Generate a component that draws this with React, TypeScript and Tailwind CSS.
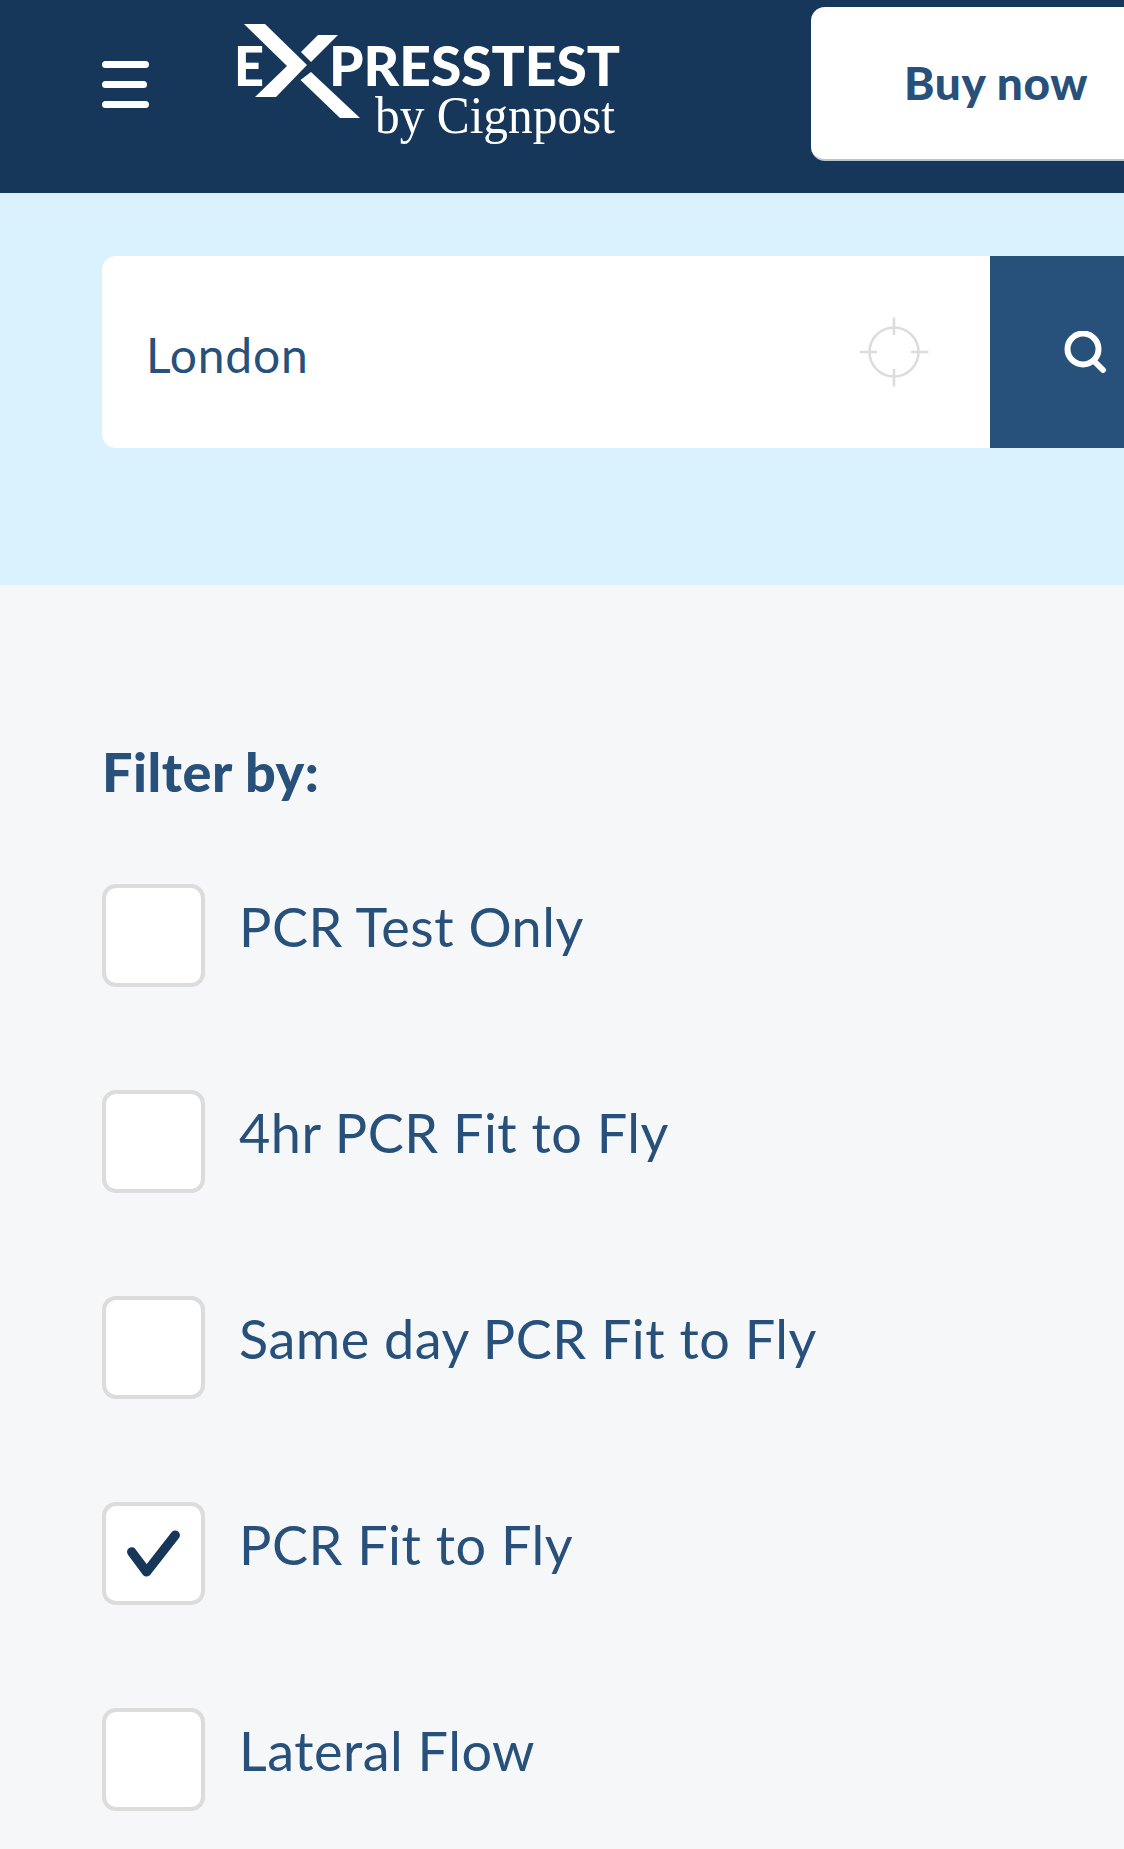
import React from 'react'

const filters = [
    { name: "PCR Test Only", checked: false },
    { name: "4hr PCR Fit to Fly", checked: false },
    { name: "Same day PCR Fit to Fly", checked: false },
    { name: "PCR Fit to Fly", checked: true },
    { name: "Lateral Flow", checked: false },
]

const Logo = () => (
    <svg width="395" height="150" viewBox="230 20 395 150" className="shrink-0 block">
        <text x="234" y="86" fill="#fff" fontFamily="Lato, sans-serif" fontWeight="900" fontSize="56" textLength="30" lengthAdjust="spacingAndGlyphs">E</text>
        <polygon fill="#fff" points="244,24 265,24 307,65 276,97 255,97 287,66" />
        <polygon fill="#fff" points="318,35 338,35 311,62 301,52" />
        <polygon fill="#fff" points="311,72 360,118 340,118 300.5,80" />
        <text x="329" y="86" fill="#fff" fontFamily="Lato, sans-serif" fontWeight="900" fontSize="56" textLength="291" lengthAdjust="spacingAndGlyphs">PRESSTEST</text>
        <text x="375" y="133" fill="#fff" fontFamily="'Liberation Serif', serif" fontSize="52" textLength="240" lengthAdjust="spacingAndGlyphs">by Cignpost</text>
    </svg>
)

const Crosshair = () => (
    <svg width="70" height="70" viewBox="0 0 70 70" fill="none" stroke="#dcdcdc" strokeWidth="2.5" className="shrink-0">
        <circle cx="35" cy="35" r="24.5" />
        <path d="M35 0.5V18M35 52V69.5M0.5 35H18M52 35H69.5" />
    </svg>
)

const SearchIcon = () => (
    <svg width="44" height="44" viewBox="0 0 44 44" fill="none" stroke="#fff" strokeWidth="6" strokeLinecap="round">
        <circle cx="19" cy="18" r="15.5" />
        <path d="M31 31L39 39" />
    </svg>
)

const Check = () => (
    <svg width="96" height="96" viewBox="0 0 96 96" fill="none" stroke="#16365a" strokeWidth="9.5" strokeLinecap="round" strokeLinejoin="round">
        <path d="M26 46L41 66L70 29" />
    </svg>
)

const App = () => {
    return (
        <div className="w-[1124px] h-[1849px] overflow-hidden bg-[#f5f7f9] font-['Lato',sans-serif]">
            <header className="h-[193px] bg-[#16365a] flex items-start pl-[102px] overflow-hidden">
                <div className="w-[47px] shrink-0 mt-[61px] flex flex-col gap-[13px]">
                    <span className="block h-[7px] bg-white rounded-full"></span>
                    <span className="block h-[7px] w-[45px] bg-white rounded-sm"></span>
                    <span className="block h-[7px] bg-white rounded-full"></span>
                </div>
                <div className="ml-[81px] mt-[20px]">
                    <Logo />
                </div>
                <div className="ml-[186px] mt-[7px] w-[330px] h-[154px] shrink-0 bg-white rounded-[14px] border-b-2 border-[#b9c4cf] pl-[93px] flex items-center">
                    <span className="text-[46px] tracking-[0.6px] font-black text-[#27507a] leading-none">Buy now</span>
                </div>
            </header>
            <section className="h-[392px] bg-[#d9f2fd] pl-[102px] pt-[63px]">
                <div className="flex h-[192px] w-[1022px]">
                    <div className="w-[888px] bg-white rounded-l-[14px] flex items-center justify-between pl-[44px] pr-[61px]">
                        <span className="text-[48px] tracking-[0.8px] text-[#27507a] leading-none pt-[6px]">London</span>
                        <Crosshair />
                    </div>
                    <div className="w-[134px] bg-[#27507a] flex items-center pl-[74px] pt-[2px]">
                        <SearchIcon />
                    </div>
                </div>
            </section>
            <section className="pl-[102px] pt-[160px]">
                <h2 className="text-[54px] tracking-[0.5px] font-black text-[#27507a] leading-none">Filter by:</h2>
                <ul className="mt-[85px] flex flex-col gap-[103px]">
                    {filters.map((filter, i) => (
                        <li key={i} className="flex items-start h-[103px]">
                            <div className="w-[103px] h-[103px] shrink-0 bg-white border-4 border-[#dcdcdc] rounded-[14px] flex items-center justify-center">
                                {filter.checked && <Check />}
                            </div>
                            <span className="ml-[34px] text-[54px] tracking-[0.5px] text-[#27507a] leading-none pt-[16px]">{filter.name}</span>
                        </li>
                    ))}
                </ul>
            </section>
        </div>
    )
}

export default App
